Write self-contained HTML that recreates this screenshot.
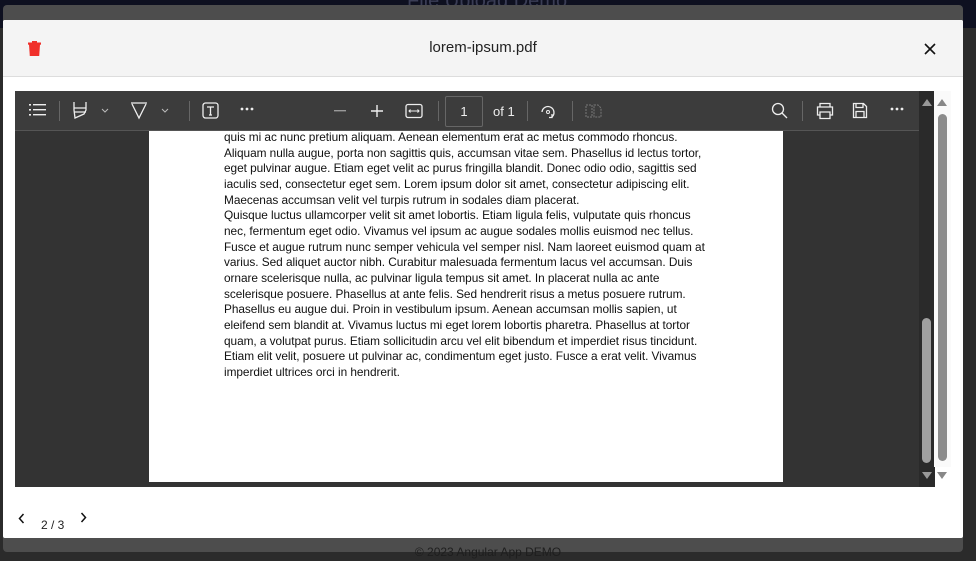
<!DOCTYPE html>
<html><head><meta charset="utf-8"><style>
*{margin:0;padding:0;box-sizing:border-box}
body{width:976px;height:561px;overflow:hidden;background:#2b2b2b;font-family:"Liberation Sans",sans-serif;position:relative}
.topbar{position:absolute;left:0;top:0;width:976px;height:28px;background:#0e1020}
.toptitle{position:absolute;left:407px;top:-10px;font-size:20px;color:#3a3d55}
.frame{position:absolute;left:3px;top:5px;width:960px;height:547px;background:#4d4d4d;border-radius:4px}
.foot{position:absolute;left:0;top:545px;width:976px;text-align:center;font-size:12px;color:#1e1e1e}
.dlg{position:absolute;left:3px;top:20px;width:960px;height:518px;background:#fff;border-radius:2px;overflow:hidden}
.hdr{position:absolute;left:0;top:0;width:960px;height:57px;background:#f4f4f4;border-bottom:1px solid #ddd}
.title{position:absolute;left:0;width:960px;top:19px;text-align:center;font-size:15px;color:#222}
.viewer{position:absolute;left:12px;top:71px;width:920px;height:396px;background:#333}
.tb{position:absolute;left:0;top:0;width:904px;height:40px;background:#3c3c3c;border-bottom:1px solid #555}
.page{position:absolute;left:134px;top:40px;width:634px;height:351px;background:#fff;overflow:hidden}
.txt{position:absolute;left:75px;top:-1px;font-size:11.85px;line-height:15.67px;color:#111;white-space:pre;letter-spacing:-0.05px}
.isb{position:absolute;left:904px;top:0;width:16px;height:396px;background:#2a2a2a}
.osb{position:absolute;left:934px;top:91px;width:17px;height:376px;background:#fafafa}
.sep{position:absolute;top:10px;width:1px;height:20px;background:#666}
svg{position:absolute}
</style></head><body>
<div class="topbar"><div class="toptitle">File Upload Demo</div></div>
<div class="frame"></div>
<div class="foot">© 2023 Angular App DEMO</div>
<div class="dlg">
 <div class="hdr">
  <svg style="left:25px;top:21px" width="13" height="15" viewBox="0 0 13 15"><rect x="0" y="1.5" width="13" height="2.2" fill="#f0302a"/><rect x="4" y="0" width="5" height="2" fill="#f0302a"/><path d="M1 3.5h11l-0.8 11.5h-9.4z" fill="#f0302a"/></svg>
  <div class="title">lorem-ipsum.pdf</div>
  <svg style="left:921px;top:23px" width="12" height="12" viewBox="0 0 12 12"><path d="M1 1L11 11M11 1L1 11" stroke="#111" stroke-width="1.6"/></svg>
 </div>
 <div class="viewer">
  <div class="tb">
   <svg style="left:14px;top:12px" width="18" height="14" viewBox="0 0 18 14"><g fill="#eee"><rect x="0" y="1" width="2" height="1.6"/><rect x="4" y="1" width="13" height="1.4"/><rect x="0" y="6" width="2" height="1.6"/><rect x="4" y="6" width="13" height="1.4"/><rect x="0" y="11" width="2" height="1.6"/><rect x="4" y="11" width="13" height="1.4"/></g></svg>
   <div class="sep" style="left:44px"></div>
   <svg style="left:57px;top:10px" width="16" height="20" viewBox="0 0 16 20"><path d="M2 1v6h12V1M2 7v2l1 8 9-4 2-4V7M2 11h12" stroke="#eee" fill="none" stroke-width="1.3"/></svg>
   <svg style="left:86px;top:17px" width="8" height="6" viewBox="0 0 8 6"><path d="M1 1l3 3 3-3" stroke="#bbb" fill="none"/></svg>
   <svg style="left:115px;top:10px" width="18" height="20" viewBox="0 0 18 20"><path d="M1 2h16M2 3l7 14 7-14" stroke="#eee" fill="none" stroke-width="1.3"/></svg>
   <svg style="left:146px;top:17px" width="8" height="6" viewBox="0 0 8 6"><path d="M1 1l3 3 3-3" stroke="#bbb" fill="none"/></svg>
   <div class="sep" style="left:174px"></div>
   <svg style="left:187px;top:11px" width="18" height="18" viewBox="0 0 18 18"><rect x="1" y="1" width="15" height="15" rx="2.5" stroke="#eee" fill="none" stroke-width="1.3"/><path d="M5 5h7M8.5 5v8M7 13h3" stroke="#eee" stroke-width="1.3" fill="none"/></svg>
   <svg style="left:225px;top:16px" width="16" height="4"><circle cx="2" cy="2" r="1.4" fill="#eee"/><circle cx="7" cy="2" r="1.4" fill="#eee"/><circle cx="12" cy="2" r="1.4" fill="#eee"/></svg>
   <svg style="left:319px;top:19px" width="12" height="2"><rect width="12" height="1.4" fill="#999"/></svg>
   <svg style="left:355px;top:13px" width="14" height="14"><path d="M7 1v12M1 7h12" stroke="#eee" stroke-width="1.4"/></svg>
   <svg style="left:390px;top:12px" width="18" height="16" viewBox="0 0 18 16"><rect x="1" y="1.5" width="16" height="13" rx="2" stroke="#eee" fill="none" stroke-width="1.3"/><path d="M4 8h10M5.5 6.5L4 8l1.5 1.5M12.5 6.5L14 8l-1.5 1.5" stroke="#eee" fill="none"/></svg>
   <div class="sep" style="left:423px"></div>
   <div style="position:absolute;left:430px;top:5px;width:38px;height:31px;border:1px solid #666;border-radius:2px;color:#eee;font-size:13px;text-align:center;line-height:29px">1</div>
   <div style="position:absolute;left:478px;top:13px;color:#eee;font-size:13px">of 1</div>
   <div class="sep" style="left:512px"></div>
   <svg style="left:524px;top:11px" width="18" height="18" viewBox="0 0 18 18"><path d="M3 10A6 6 0 1 1 13 15" stroke="#eee" fill="none" stroke-width="1.3"/><path d="M13 12v3.5h-3" stroke="#eee" fill="none" stroke-width="1.3"/><circle cx="9" cy="10" r="1.5" stroke="#eee" fill="none"/></svg>
   <div class="sep" style="left:557px"></div>
   <svg style="left:570px;top:12px" width="17" height="16" viewBox="0 0 17 16"><path d="M1 2h6v12H1zM9 2h4l3 3v9H9z" stroke="#777" fill="none" stroke-dasharray="2 1"/></svg>
   <svg style="left:756px;top:11px" width="17" height="17" viewBox="0 0 17 17"><circle cx="7" cy="7" r="5.5" stroke="#eee" fill="none" stroke-width="1.3"/><path d="M11 11l5 5" stroke="#eee" stroke-width="1.3"/></svg>
   <div class="sep" style="left:787px"></div>
   <svg style="left:801px;top:11px" width="18" height="18" viewBox="0 0 18 18"><path d="M4 5V1.5h10V5M4 13H1.5V5h15v8H14M4 10h10v6.5H4z" stroke="#eee" fill="none" stroke-width="1.3"/></svg>
   <svg style="left:837px;top:11px" width="16" height="17" viewBox="0 0 16 17"><path d="M1.5 1.5h10l3 3v11h-13z M4 1.5v4h7v-4M4 15.5v-6h8v6" stroke="#eee" fill="none" stroke-width="1.3"/></svg>
   <svg style="left:875px;top:16px" width="16" height="4"><circle cx="2" cy="2" r="1.4" fill="#eee"/><circle cx="7" cy="2" r="1.4" fill="#eee"/><circle cx="12" cy="2" r="1.4" fill="#eee"/></svg>
  </div>
  <div class="page"><div class="txt">quis mi ac nunc pretium aliquam. Aenean elementum erat ac metus commodo rhoncus.
Aliquam nulla augue, porta non sagittis quis, accumsan vitae sem. Phasellus id lectus tortor,
eget pulvinar augue. Etiam eget velit ac purus fringilla blandit. Donec odio odio, sagittis sed
iaculis sed, consectetur eget sem. Lorem ipsum dolor sit amet, consectetur adipiscing elit.
Maecenas accumsan velit vel turpis rutrum in sodales diam placerat.
Quisque luctus ullamcorper velit sit amet lobortis. Etiam ligula felis, vulputate quis rhoncus
nec, fermentum eget odio. Vivamus vel ipsum ac augue sodales mollis euismod nec tellus.
Fusce et augue rutrum nunc semper vehicula vel semper nisl. Nam laoreet euismod quam at
varius. Sed aliquet auctor nibh. Curabitur malesuada fermentum lacus vel accumsan. Duis
ornare scelerisque nulla, ac pulvinar ligula tempus sit amet. In placerat nulla ac ante
scelerisque posuere. Phasellus at ante felis. Sed hendrerit risus a metus posuere rutrum.
Phasellus eu augue dui. Proin in vestibulum ipsum. Aenean accumsan mollis sapien, ut
eleifend sem blandit at. Vivamus luctus mi eget lorem lobortis pharetra. Phasellus at tortor
quam, a volutpat purus. Etiam sollicitudin arcu vel elit bibendum et imperdiet risus tincidunt.
Etiam elit velit, posuere ut pulvinar ac, condimentum eget justo. Fusce a erat velit. Vivamus
imperdiet ultrices orci in hendrerit.</div></div>
  <div class="isb">
   <svg style="left:3px;top:7px" width="10" height="8"><path d="M0 8L5 1 10 8z" fill="#999"/></svg>
   <div style="position:absolute;left:3px;top:227px;width:9px;height:145px;background:#a0a0a0;border-radius:5px"></div>
   <svg style="left:3px;top:381px" width="10" height="8"><path d="M0 0L5 7 10 0z" fill="#999"/></svg>
  </div>
 </div>
</div>
<div class="osb">
 <svg style="left:3px;top:7px" width="10" height="8"><path d="M0 8L5 1 10 8z" fill="#888"/></svg>
 <div style="position:absolute;left:4px;top:23px;width:9px;height:347px;background:#8c8c8c;border-radius:5px"></div>
 <svg style="left:3px;top:381px" width="10" height="8"><path d="M0 0L5 7 10 0z" fill="#888"/></svg>
</div>
<svg style="left:18px;top:513px" width="7" height="11" viewBox="0 0 7 11"><path d="M5.5 1L1.5 5.5l4 4.5" stroke="#111" fill="none" stroke-width="1.5"/></svg>
<div style="position:absolute;left:41px;top:518px;font-size:12px;color:#222">2 / 3</div>
<svg style="left:80px;top:512px" width="7" height="11" viewBox="0 0 7 11"><path d="M1.5 1l4 4.5-4 4.5" stroke="#111" fill="none" stroke-width="1.5"/></svg>
</body></html>
